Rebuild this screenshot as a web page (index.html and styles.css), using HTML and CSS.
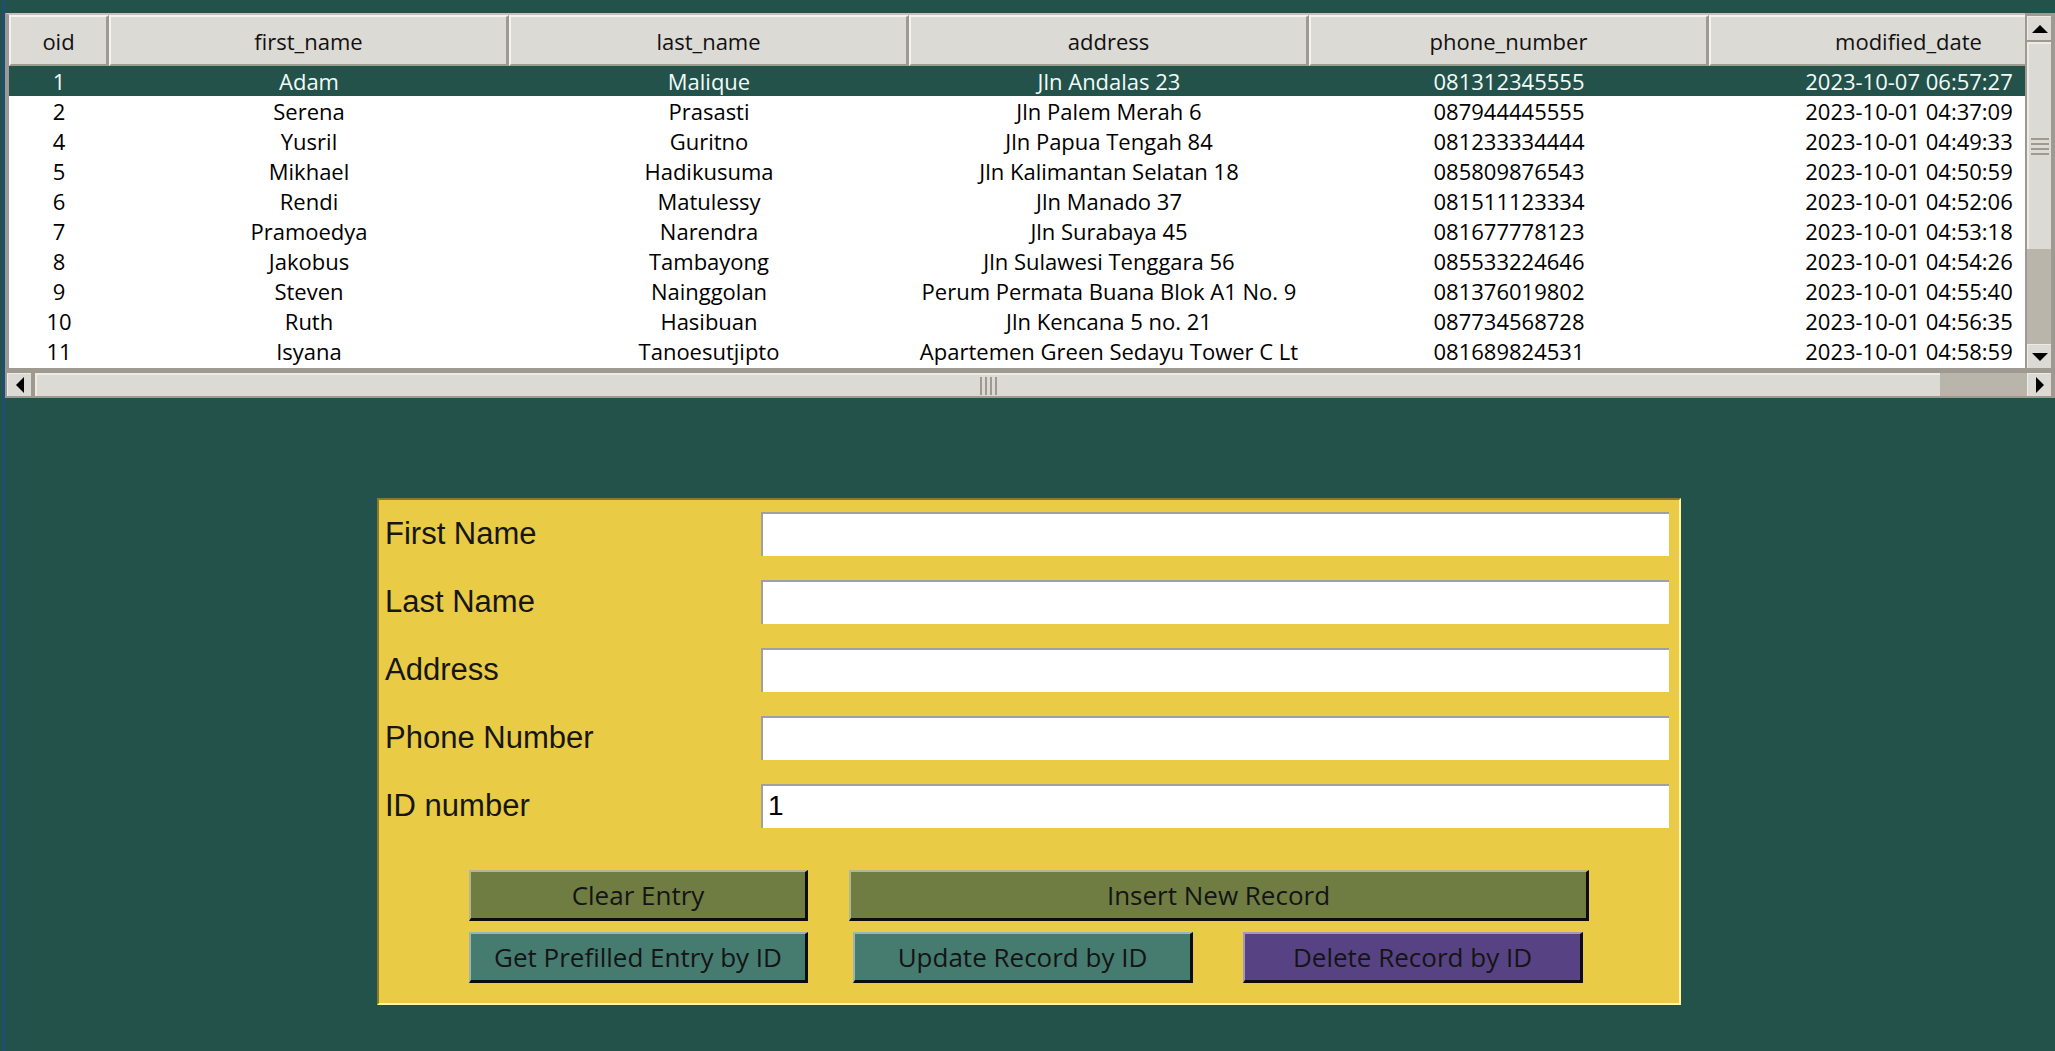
FILE: index.html
```html
<!DOCTYPE html>
<html>
<head>
<meta charset="utf-8">
<link rel="stylesheet" href="styles.css">
</head>
<body>
<div class="app">
  <div class="table-frame">
    <div class="tree-row">
      <div class="tree">
        <div class="tree-inner">
          <div class="row head">
            <div class="hcell">oid</div>
            <div class="hcell">first_name</div>
            <div class="hcell">last_name</div>
            <div class="hcell">address</div>
            <div class="hcell">phone_number</div>
            <div class="hcell">modified_date</div>
          </div>
          <div class="row data sel"><div>1</div><div>Adam</div><div>Malique</div><div>Jln Andalas 23</div><div>081312345555</div><div>2023-10-07 06:57:27</div></div>
          <div class="row data"><div>2</div><div>Serena</div><div>Prasasti</div><div>Jln Palem Merah 6</div><div>087944445555</div><div>2023-10-01 04:37:09</div></div>
          <div class="row data"><div>4</div><div>Yusril</div><div>Guritno</div><div>Jln Papua Tengah 84</div><div>081233334444</div><div>2023-10-01 04:49:33</div></div>
          <div class="row data"><div>5</div><div>Mikhael</div><div>Hadikusuma</div><div>Jln Kalimantan Selatan 18</div><div>085809876543</div><div>2023-10-01 04:50:59</div></div>
          <div class="row data"><div>6</div><div>Rendi</div><div>Matulessy</div><div>Jln Manado 37</div><div>081511123334</div><div>2023-10-01 04:52:06</div></div>
          <div class="row data"><div>7</div><div>Pramoedya</div><div>Narendra</div><div>Jln Surabaya 45</div><div>081677778123</div><div>2023-10-01 04:53:18</div></div>
          <div class="row data"><div>8</div><div>Jakobus</div><div>Tambayong</div><div>Jln Sulawesi Tenggara 56</div><div>085533224646</div><div>2023-10-01 04:54:26</div></div>
          <div class="row data"><div>9</div><div>Steven</div><div>Nainggolan</div><div>Perum Permata Buana Blok A1 No. 9</div><div>081376019802</div><div>2023-10-01 04:55:40</div></div>
          <div class="row data"><div>10</div><div>Ruth</div><div>Hasibuan</div><div>Jln Kencana 5 no. 21</div><div>087734568728</div><div>2023-10-01 04:56:35</div></div>
          <div class="row data"><div>11</div><div>Isyana</div><div>Tanoesutjipto</div><div>Apartemen Green Sedayu Tower C Lt</div><div>081689824531</div><div>2023-10-01 04:58:59</div></div>
        </div>
      </div>
      <div class="vscroll">
        <div class="sbtn"><span class="tri up"></span></div>
        <div class="vthumb"><div class="vgrip"><i></i><i></i><i></i><i></i></div></div>
        <div class="vtrough"></div>
        <div class="sbtn"><span class="tri down"></span></div>
      </div>
    </div>
    <div class="hscroll">
      <div class="sbtn h"><span class="tri left"></span></div>
      <div class="hthumb"><div class="hgrip"><i></i><i></i><i></i><i></i></div></div>
      <div class="htrough"></div>
      <div class="sbtn h"><span class="tri right"></span></div>
    </div>
  </div>

  <div class="form-wrap">
    <div class="form">
      <div class="fields">
        <label class="lbl">First Name</label><div class="entry"></div>
        <label class="lbl">Last Name</label><div class="entry"></div>
        <label class="lbl">Address</label><div class="entry"></div>
        <label class="lbl">Phone Number</label><div class="entry"></div>
        <label class="lbl">ID number</label><div class="entry">1</div>
      </div>
      <div class="btn-row r1">
        <div class="btn olive w-clear">Clear Entry</div>
        <div class="btn olive w-insert">Insert New Record</div>
      </div>
      <div class="btn-row r2">
        <div class="btn teal w-get">Get Prefilled Entry by ID</div>
        <div class="btn teal w-upd">Update Record by ID</div>
        <div class="btn purple w-del">Delete Record by ID</div>
      </div>
    </div>
  </div>
</div>
</body>
</html>
```

FILE: styles.css
```css
html, body {
  margin: 0;
  padding: 0;
  background: #22524a;
  width: 2055px;
  height: 1051px;
  overflow: hidden;
}
.app {
  margin-left: 3px;
  border-left: 2px solid #1a4c86;
  height: 1051px;
  padding-top: 13px;
  box-sizing: border-box;
}
.table-frame {
  width: 2050px;
}
.tree-row {
  display: flex;
  height: 358px;
}
.tree {
  width: 2016px;
  overflow: hidden;
  background: #ffffff;
  border-left: 4px solid #9e9a91;
  border-top: 2px solid #c4c1ba;
  border-bottom: 3px solid #9e9a91;
  box-sizing: content-box;
  height: 353px;
}
.tree-inner {
  width: 2100px;
}
.row {
  display: grid;
  grid-template-columns: 100px 400px 400px 400px 400px 400px;
}
.hcell {
  height: 51px;
  box-sizing: border-box;
  background: #dcdad5;
  border-top: 2px solid #f4f3f0;
  border-left: 2px solid #f4f3f0;
  border-right: 3px solid #9e9a91;
  border-bottom: 2px solid #9e9a91;
  font-family: "Open Sans", sans-serif;
  font-size: 22px;
  color: #111;
  text-align: center;
  line-height: 48px;
}
.data > div {
  height: 30px;
  line-height: 30px;
  font-family: "Open Sans", sans-serif;
  font-size: 22px;
  color: #000;
  text-align: center;
  white-space: nowrap;
  overflow: hidden;
}
.data.sel {
  background: #22524a;
}
.data.sel > div {
  color: #f2fbf8;
}
.vscroll {
  width: 30px;
  height: 358px;
  background: #9e9a91;
  padding: 3px 4px 3px 2px;
  box-sizing: border-box;
  display: flex;
  flex-direction: column;
}
.sbtn {
  height: 24px;
  flex: none;
  background: #dcdad5;
  border-top: 1px solid #eeebe7;
  border-left: 1px solid #eeebe7;
  box-sizing: border-box;
  display: flex;
  align-items: center;
  justify-content: center;
}
.vthumb {
  margin-top: 2px;
  height: 207px;
  background: #dcdad5;
  border-top: 2px solid #eeebe7;
  border-left: 2px solid #eeebe7;
  box-sizing: border-box;
  display: flex;
  align-items: center;
  justify-content: center;
}
.vgrip {
  display: flex;
  flex-direction: column;
  gap: 3px;
  width: 18px;
}
.vgrip i {
  display: block;
  height: 2px;
  background: #9e9a91;
}
.vtrough {
  flex: 1;
  background: #bab5ab;
}
.hscroll {
  height: 27px;
  display: flex;
  background: #9e9a91;
  padding: 2px 4px 2px 2px;
  box-sizing: border-box;
}
.sbtn.h {
  width: 24px;
  height: 23px;
}
.hthumb {
  width: 1905px;
  margin-left: 4px;
  background: #dcdad5;
  border-top: 2px solid #eeebe7;
  border-left: 2px solid #eeebe7;
  box-sizing: border-box;
  display: flex;
  align-items: center;
  justify-content: center;
}
.hgrip {
  display: flex;
  gap: 3px;
  height: 18px;
}
.hgrip i {
  display: block;
  width: 2px;
  background: #9e9a91;
}
.htrough {
  flex: 1;
  background: #bab5ab;
}
.tri {
  width: 0;
  height: 0;
  display: block;
}
.tri.up {
  border-left: 8px solid transparent;
  border-right: 8px solid transparent;
  border-bottom: 8px solid #000;
}
.tri.down {
  border-left: 8px solid transparent;
  border-right: 8px solid transparent;
  border-top: 8px solid #000;
}
.tri.left {
  border-top: 8px solid transparent;
  border-bottom: 8px solid transparent;
  border-right: 8px solid #000;
}
.tri.right {
  border-top: 8px solid transparent;
  border-bottom: 8px solid transparent;
  border-left: 8px solid #000;
}

.form-wrap {
  padding-left: 372px;
  padding-top: 100px;
}
.form {
  width: 1304px;
  height: 507px;
  box-sizing: border-box;
  background: #e9cb45;
  border-top: 2px solid #8c7a2c;
  border-left: 2px solid #8c7a2c;
  border-right: 2px solid #fff5a6;
  border-bottom: 2px solid #fff5a6;
  padding: 12px 10px 0 6px;
}
.fields {
  display: grid;
  grid-template-columns: 376px 908px;
  row-gap: 24px;
  align-items: center;
}
.lbl {
  font-family: "Liberation Sans", Arial, sans-serif;
  font-size: 31px;
  color: #161616;
  line-height: 44px;
}
.entry {
  height: 44px;
  box-sizing: border-box;
  background: #fff;
  border-top: 2px solid #a0a0a0;
  border-left: 2px solid #a0a0a0;
  font-family: "Liberation Sans", Arial, sans-serif;
  font-size: 28px;
  line-height: 40px;
  padding-left: 5px;
  color: #000;
}
.btn-row {
  display: flex;
  padding-left: 84px;
}
.r1 {
  margin-top: 42px;
  gap: 41px;
}
.r2 {
  margin-top: 11px;
}
.btn {
  height: 51px;
  box-sizing: border-box;
  border-top: 2px solid rgba(255,255,255,0.45);
  border-left: 2px solid rgba(255,255,255,0.45);
  border-right: 3px solid #0c0c0c;
  border-bottom: 3px solid #0c0c0c;
  font-family: "Open Sans", sans-serif;
  font-size: 26px;
  color: #141414;
  display: flex;
  align-items: center;
  justify-content: center;
}
.olive { background: #6f7d42; }
.teal { background: #467b70; }
.purple { background: #574383; }
.w-clear { width: 339px; }
.w-insert { width: 740px; }
.w-get { width: 339px; }
.w-upd { width: 340px; margin-left: 45px; }
.w-del { width: 340px; margin-left: 50px; }
```
